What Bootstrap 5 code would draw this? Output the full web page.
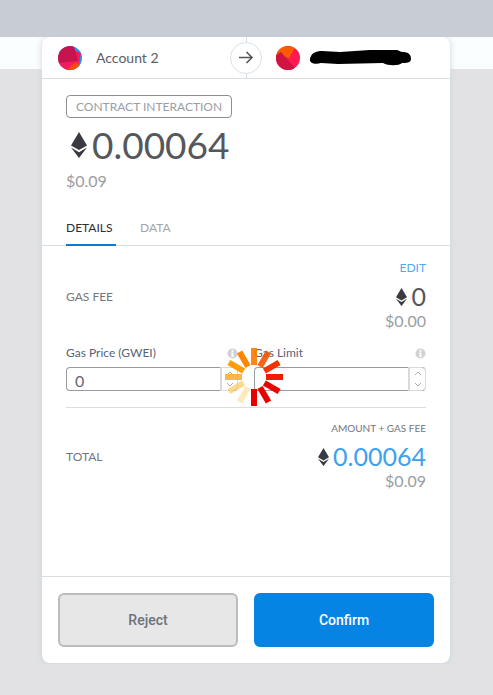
<!DOCTYPE html>
<html lang="en">
<head>
<meta charset="utf-8">
<meta name="viewport" content="width=device-width, initial-scale=1">
<title>Confirm transaction</title>
<link href="https://cdn.jsdelivr.net/npm/bootstrap@5.3.0/dist/css/bootstrap.min.css" rel="stylesheet">
<style>
  body { font-family: Lato, "Liberation Sans", sans-serif; font-weight: 400; font-size: 12px; line-height: 16px; color: #74767d; background: #e2e2e4; }
  .top-band { height: 37px; background: #c8ccd5; }
  .stage { padding: 0 43px 32px 42px; background: linear-gradient(#fbfeff 32px, #e2e2e4 32px); }
  .panel { background: #fff; border-radius: 8px; box-shadow: 0 0 7px #c9d6dd; min-height: 626px; clip-path: inset(0 -12px -1px -12px); }
  .line { border-color: #d8dde1 !important; }
  .parties { height: 42px; }
  .party { font-size: 14px; color: #5b5d67; gap: 14px; }
  .recipient { padding-right: 22px; }
  .arrow-disc { width: 32px; height: 32px; border: 1px solid #dbe2e7; border-radius: 50%; background: #fff; }
  .divider { width: 1px; background: #d8dde1; }
  .action-tag { border: 1px solid #8c8e94; border-radius: 4px; padding: 3px 9px; line-height: 15px; color: #9b9da3; }
  .amount { font-size: 37px; line-height: 42px; padding-top: 6px; color: #55575c; }
  .fiat { font-size: 16px; line-height: 24px; color: #9b9da3; }
  .fiat-main { margin-top: 3px; }
  .tabs-bar { margin-top: 27px; }
  .tab-btn { border: 0; border-bottom: 2px solid transparent; background: none; padding: 0 0 8px; color: #a3a5aa; width: 50px; margin-bottom: -1px; }
  .tab-btn.active { color: #2c2e33; border-color: #037dd6; }
  .fee-row { padding-top: 14px; }
  .edit-link { color: #50aaee; }
  .value { font-size: 25px; line-height: 25px; color: #55575c; }
  .value-blue { color: #3da1ee; }
  .caption { font-size: 10px; }
  .field-head { margin-bottom: 6px; }
  .field-label { color: #566377; }
  .gas-box { height: 24px; border: 1px solid #9b9b9b; border-right-color: #dadada; border-radius: 4px; background: #fff; }
  .gas-box input { border: 0; outline: 0; min-width: 0; padding: 2px 8px 0; font-size: 16px; color: #66686f; background: none; appearance: textfield; }
  .stepper { width: 16px; border-left: 1px solid #dadada; border-radius: 0 4px 4px 0; box-shadow: 0 0 0 1px #dadada; }
  .stepper button { border: 0; background: none; line-height: 0; }
  .loader { left: -30px; top: 2px; }
  .act { height: 54px; border-radius: 6px; font: 500 14px/16px Roboto, sans-serif; }
  .act-reject, .act-reject:hover { background: #e7e7e7; border: 2px solid #bcbcbc; color: #6a737d; }
  .act-confirm, .act-confirm:hover { background: #0684e4; border: 2px solid #0684e4; color: #fff; }
</style>
</head>
<body>
<svg class="d-none" xmlns="http://www.w3.org/2000/svg">
  <symbol id="eth" viewBox="0 0 16 26"><path fill="#393a42" d="M8 0 0 13.500l8 4.500 8-4.500zM0 15.500 8 26l8-10.500-8 4.700z"/></symbol>
  <symbol id="info" viewBox="0 0 12 12"><circle cx="6" cy="6" r="5.500" fill="#d2d2d4"/><path fill="#fff" d="M5 2h2v2H5zM4.500 5H7v3.500h.7v1H4.300v-1H5V6h-.5z"/></symbol>
</svg>
<div class="top-band"></div>
<main class="stage">
  <div class="panel d-flex flex-column">
    <header class="parties d-flex align-items-center border-bottom line position-relative">
      <div class="party d-flex align-items-center ps-3 w-50">
        <svg width="24" height="24" viewBox="0 0 24 24"><defs><clipPath id="disc"><circle cx="12" cy="12" r="12"/></clipPath></defs><g clip-path="url(#disc)"><path fill="#2196f3" d="M0 0h24v24H0z"/><path fill="#f9195f" d="m18 5 5 2-2 11-8 6H0v-8z"/><path fill="#c8144e" d="M0 0h16l4 15L0 17z"/><path fill="#fc4a02" d="m8 24 10-8 4 4-4 4z"/></g></svg>
        <span>Account 2</span>
      </div>
      <div class="divider position-absolute start-50 top-0 h-100"></div>
      <div class="arrow-disc d-flex align-items-center justify-content-center position-absolute top-50 start-50 translate-middle">
        <svg width="16" height="16" viewBox="0 0 16 16" fill="none" stroke="#555" stroke-width="1.600"><path d="M1 7.500h13M8.500 2l5.500 5.500L8.500 13"/></svg>
      </div>
      <div class="recipient d-flex align-items-center justify-content-end w-50 gap-2">
        <svg width="24" height="24" viewBox="0 0 24 24"><g clip-path="url(#disc)"><path fill="#ff1a4f" d="M0 0h24v24H0z"/><path fill="#fc5b00" d="M0 0h20l-7 12L0 9z"/><path fill="#d01442" d="m0 9 5-3 14 16-5 4H0z"/></g></svg>
        <svg class="me-3" width="104" height="18" viewBox="0 0 104 18"><path d="M2 10C3 4 8 2 14 2l18 1 30-2h26c3 0 4 2 7 2 7 0 8 4 8 7 0 4-5 4-9 4-3 3-14 3-19 0l-45 1-17-1c-6 2-12 0-11-4z"/></svg>
      </div>
    </header>

    <section class="px-4 pt-3">
      <div class="d-flex"><span class="action-tag">CONTRACT INTERACTION</span></div>
      <div class="amount d-flex align-items-center"><svg class="mx-1" width="18" height="26"><use href="#eth"/></svg><span>0.00064</span></div>
      <div class="fiat fiat-main">$0.09</div>
    </section>

    <nav class="tabs-bar d-flex gap-4 px-4 border-bottom line" role="tablist">
      <button class="tab-btn active text-start" type="button" role="tab" aria-selected="true">DETAILS</button>
      <button class="tab-btn text-start" type="button" role="tab" aria-selected="false">DATA</button>
    </nav>

    <section class="px-4">
      <div class="fee-row d-flex justify-content-between align-items-center">
        <span>GAS FEE</span>
        <div class="d-flex flex-column align-items-end">
          <a class="edit-link text-decoration-none mb-2" href="#">EDIT</a>
          <div class="value d-flex align-items-center"><svg class="me-1" width="11" height="18"><use href="#eth"/></svg><span>0</span></div>
          <div class="fiat">$0.00</div>
        </div>
      </div>
      <div class="d-flex pt-2 pb-3 mt-1 border-bottom line">
        <div class="flex-fill w-50 me-2">
          <div class="field-head d-flex justify-content-between align-items-center"><label class="field-label" for="price">Gas Price (GWEI)</label><svg width="11" height="11"><use href="#info"/></svg></div>
          <div class="gas-box d-flex"><input id="price" class="flex-grow-1 w-100" type="number" value="0">
            <div class="stepper d-flex flex-column flex-shrink-0"><button class="flex-fill p-0" type="button" aria-label="Increase price"><svg width="8" height="5" fill="none" stroke="#aaa"><path d="m1 4 3-3 3 3"/></svg></button><button class="flex-fill p-0" type="button" aria-label="Decrease price"><svg width="8" height="5" fill="none" stroke="#aaa"><path d="m1 1 3 3 3-3"/></svg></button></div>
          </div>
        </div>
        <div class="flex-fill w-50 ms-2 position-relative">
          <div class="field-head d-flex justify-content-between align-items-center"><label class="field-label" for="limit">Gas Limit</label><svg width="11" height="11"><use href="#info"/></svg></div>
          <div class="gas-box d-flex"><input id="limit" class="flex-grow-1 w-100" type="number">
            <div class="stepper d-flex flex-column flex-shrink-0"><button class="flex-fill p-0" type="button" aria-label="Increase limit"><svg width="8" height="5" fill="none" stroke="#aaa"><path d="m1 4 3-3 3 3"/></svg></button><button class="flex-fill p-0" type="button" aria-label="Decrease limit"><svg width="8" height="5" fill="none" stroke="#aaa"><path d="m1 1 3 3 3-3"/></svg></button></div>
          </div>
          <svg class="loader position-absolute pe-none" width="60" height="60" viewBox="-30 -30 60 60" stroke-width="6">
            <path stroke="#ff7a00" stroke-opacity=".9" d="M0-12v-17"/>
            <path stroke="#f95300" stroke-opacity=".9" d="M0-12v-17" transform="rotate(30)"/>
            <path stroke="#f13400" d="M0-12v-17" transform="rotate(60)"/>
            <path stroke="#ee1c00" d="M0-12v-17" transform="rotate(90)"/>
            <path stroke="#e80500" d="M0-12v-17" transform="rotate(120)"/>
            <path stroke="#e60000" d="M0-12v-17" transform="rotate(150)"/>
            <path stroke="#e60000" d="M0-12v-17" transform="rotate(180)"/>
            <path stroke="#ffeabf" d="M0-12v-17" transform="rotate(210)"/>
            <path stroke="#ffc044" stroke-opacity=".6" d="M0-12v-17" transform="rotate(240)"/>
            <path stroke="#ffa31a" stroke-opacity=".8" d="M0-12v-17" transform="rotate(270)"/>
            <path stroke="#ff9c0a" d="M0-12v-17" transform="rotate(300)"/>
            <path stroke="#ff8700" d="M0-12v-17" transform="rotate(330)"/>
          </svg>
        </div>
      </div>
      <div class="d-flex justify-content-between align-items-center pt-2 mt-1">
        <span>TOTAL</span>
        <div class="d-flex flex-column align-items-end">
          <span class="caption mb-2">AMOUNT + GAS FEE</span>
          <div class="value d-flex align-items-center"><svg class="me-1" width="11" height="18"><use href="#eth"/></svg><span class="value-blue">0.00064</span></div>
          <div class="fiat">$0.09</div>
        </div>
      </div>
    </section>

    <footer class="d-flex gap-3 p-3 mt-auto border-top line">
      <button class="btn act act-reject w-50" type="button">Reject</button>
      <button class="btn act act-confirm w-50" type="button">Confirm</button>
    </footer>
  </div>
</main>
<script src="https://cdn.jsdelivr.net/npm/bootstrap@5.3.0/dist/js/bootstrap.bundle.min.js"></script>
</body>
</html>
